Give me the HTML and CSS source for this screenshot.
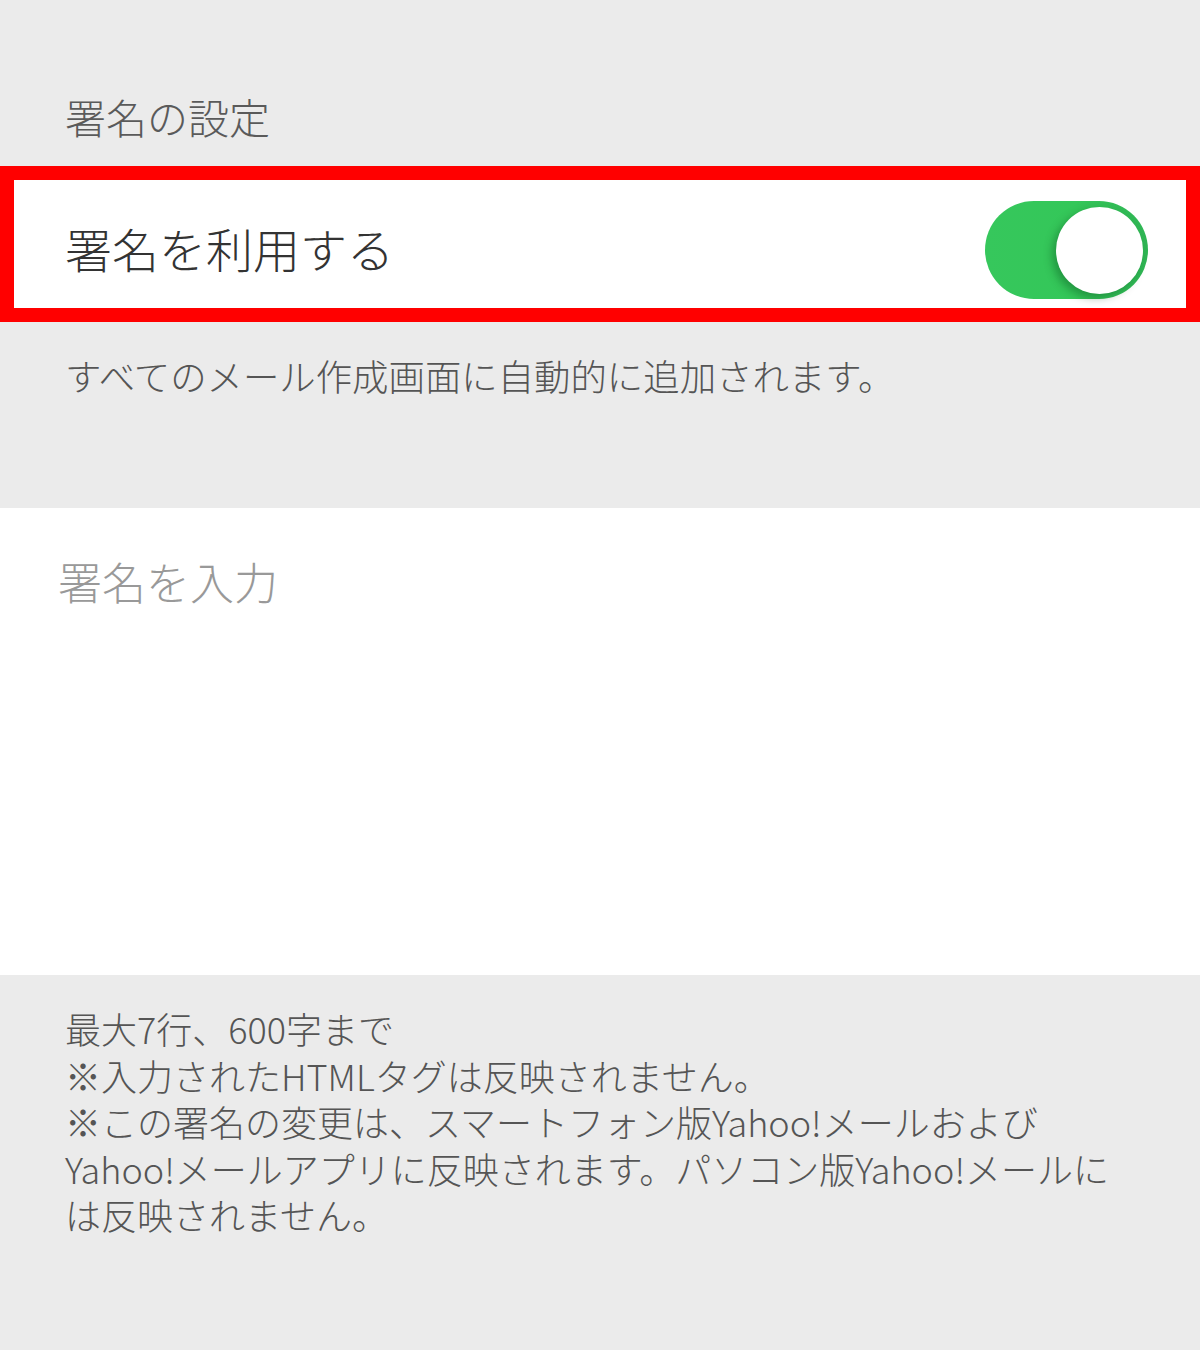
FILE: index.html
```html
<!DOCTYPE html>
<html lang="ja">
<head>
<meta charset="utf-8">
<title>署名の設定</title>
<link rel="stylesheet" href="styles.css">
</head>
<body>
<div class="page">
  <header class="section-head">
    <h1 class="section-title">署名の設定</h1>
  </header>
  <div class="toggle-row">
    <span class="toggle-label">署名を利用する</span>
    <span class="switch" role="switch" aria-checked="true">
      <span class="knob"></span>
    </span>
  </div>
  <div class="note">
    <p class="note-text">すべてのメール作成画面に自動的に追加されます。</p>
  </div>
  <div class="editor">
    <div class="placeholder">署名を入力</div>
  </div>
  <div class="footer">
    <p class="footer-text">最大7行、600字まで<br>※入力されたHTMLタグは反映されません。<br>※この署名の変更は、スマートフォン版Yahoo!メールおよび<br>Yahoo!メールアプリに反映されます。パソコン版Yahoo!メールに<br>は反映されません。</p>
  </div>
</div>
</body>
</html>
```

FILE: styles.css
```css
* { box-sizing: border-box; }
html, body {
  margin: 0;
  padding: 0;
  background: #ebebeb;
}
body {
  font-family: "Noto Sans CJK JP", "Noto Sans", sans-serif;
  font-weight: 300;
  color: #555;
}
.page {
  width: 1200px;
  min-height: 1350px;
  display: flex;
  flex-direction: column;
}
.section-head {
  height: 166px;
  display: flex;
  align-items: flex-end;
  padding: 0 0 26px 65px;
}
.section-title {
  margin: 0;
  font-size: 41px;
  font-weight: 300;
  line-height: 48px;
  color: #5a5a5a;
}
.toggle-row {
  height: 156px;
  border: 14px solid #ff0000;
  background: #fff;
  display: flex;
  align-items: center;
  justify-content: space-between;
  padding: 8px 38px 0 51px;
}
.toggle-label {
  font-size: 47px;
  line-height: 56px;
  color: #333;
}
.switch {
  position: relative;
  width: 163px;
  height: 98px;
  margin-top: 4px;
  border-radius: 49px;
  background: linear-gradient(90deg, #36c75c 0%, #34c759 55%, #2fb554 100%);
  display: block;
}
.knob {
  position: absolute;
  top: 6px;
  right: 5px;
  width: 87px;
  height: 87px;
  border-radius: 50%;
  background: #fff;
  box-shadow: -4px 4px 8px rgba(0, 60, 20, 0.35);
}
.note {
  height: 186px;
  padding: 29px 0 0 65px;
}
.note-text {
  margin: 0;
  font-size: 36.4px;
  line-height: 48px;
  color: #555;
}
.editor {
  height: 467px;
  background: #fff;
  padding: 45px 0 0 58px;
}
.placeholder {
  font-size: 44px;
  line-height: 56px;
  color: #999;
}
.footer {
  flex: 1;
  padding: 30px 65px 0 65px;
}
.footer-text {
  margin: 0;
  font-size: 36px;
  line-height: 46.5px;
  color: #555;
}
```
